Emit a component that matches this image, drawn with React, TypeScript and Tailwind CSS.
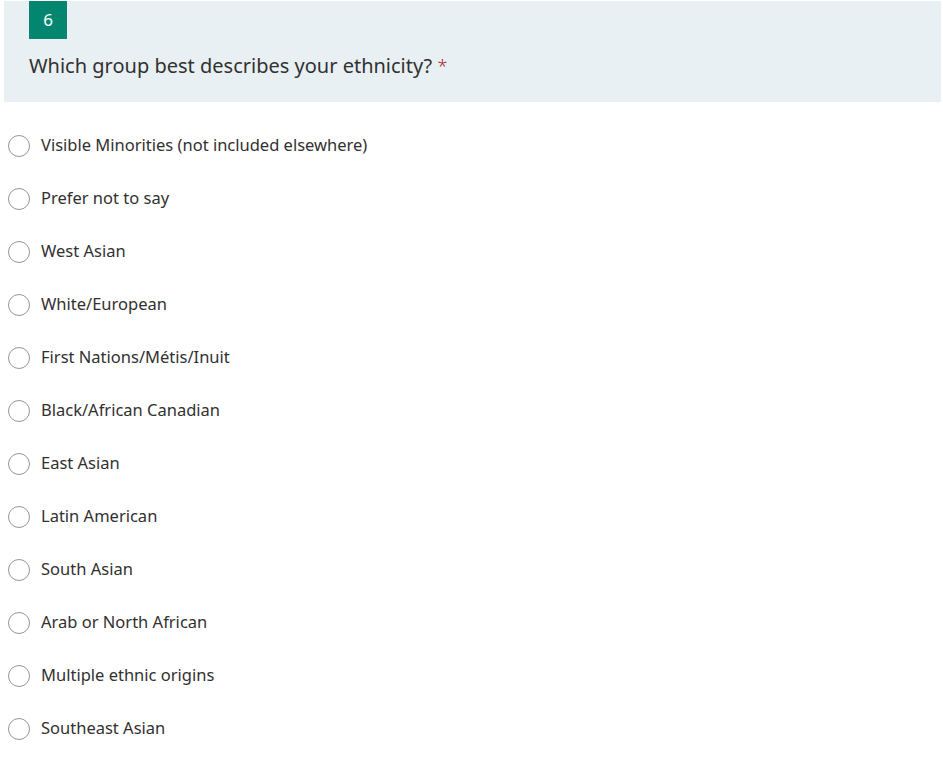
import React from "react";

const options = [
  "Visible Minorities (not included elsewhere)",
  "Prefer not to say",
  "West Asian",
  "White/European",
  "First Nations/Métis/Inuit",
  "Black/African Canadian",
  "East Asian",
  "Latin American",
  "South Asian",
  "Arab or North African",
  "Multiple ethnic origins",
  "Southeast Asian",
];

export default function App() {
  return (
    <div className="min-h-screen bg-white pt-px font-['Noto_Sans','Open_Sans',sans-serif] text-[#333]">
      {/* Question header */}
      <div className="ml-1 mr-[2px] h-[101px] bg-[#e8f0f3] pl-[25px]">
        <div className="flex h-[38px] w-[38px] items-center justify-center bg-[#03866f] text-[17px] text-white">
          6
        </div>
        <h2 className="mt-[13px] text-[20px] leading-[28px] text-[#323130]">
          Which group best describes your ethnicity?{" "}
          <span className="text-[18px] font-light text-[#a4262c]">*</span>
        </h2>
      </div>

      {/* Choices */}
      <div className="mt-[17px] flex flex-col">
        {options.map((opt) => (
          <label key={opt} className="flex h-[53px] cursor-pointer items-center gap-[11px] pl-[8px]">
            <span className="h-[22px] w-[22px] shrink-0 rounded-full border border-[#969696] bg-white" />
            <span className="text-[16.5px] text-[#323130]">{opt}</span>
          </label>
        ))}
      </div>
    </div>
  );
}
